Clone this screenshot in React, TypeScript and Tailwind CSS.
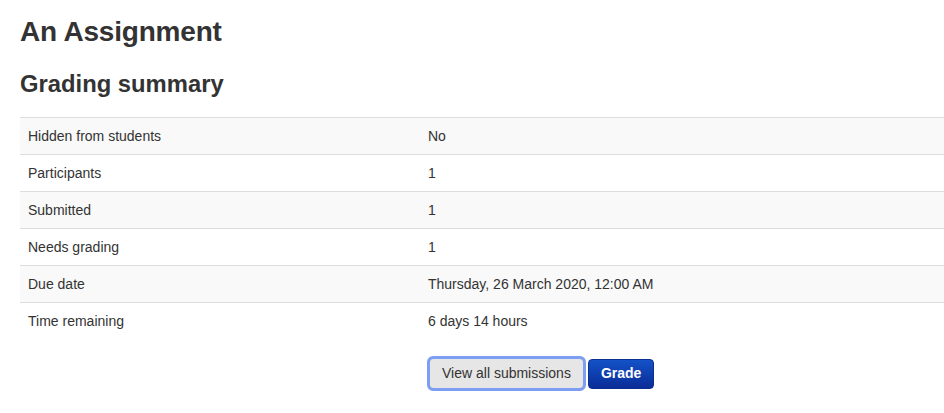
import React from "react";

const rows: [string, string][] = [
  ["Hidden from students", "No"],
  ["Participants", "1"],
  ["Submitted", "1"],
  ["Needs grading", "1"],
  ["Due date", "Thursday, 26 March 2020, 12:00 AM"],
  ["Time remaining", "6 days 14 hours"],
];

export default function App() {
  return (
    <div
      className="w-[944px] h-[413px] overflow-hidden bg-white text-[#333] pl-5"
      style={{ fontFamily: '"Liberation Sans", Arial, sans-serif' }}
    >
      <h2 className="text-[28px] font-bold leading-[40px] pt-[12px] tracking-[-0.2px]">An Assignment</h2>
      <h3 className="text-[23.8px] font-bold leading-[40px] mt-[12px]">Grading summary</h3>
      <div className="mt-[13px] w-[1000px]">
        {rows.map(([k, v], i) => (
          <div
            key={k}
            className={`flex border-t border-[#dddddd] text-[14px] leading-[20px] ${i % 2 === 0 ? "bg-[#f9f9f9]" : "bg-white"}`}
          >
            <div className="w-[400px] p-2">{k}</div>
            <div className="flex-1 p-2">{v}</div>
          </div>
        ))}
      </div>
      <div className="flex items-center gap-[4px] pl-[409px] mt-[19px]">
        <button className="h-[31px] px-[12px] rounded-[4px] border border-[#b8b8b8] bg-[#e6e6e6] text-[14px] text-[#333] outline outline-[3px] outline-[#7d9ef3] -outline-offset-[1px]">
          View all submissions
        </button>
        <button className="h-[30px] px-[12px] rounded-[4px] border border-[#0b2f8f] bg-gradient-to-b from-[#1452c7] to-[#0a2c98] text-white text-[14px] font-bold">
          Grade
        </button>
      </div>
    </div>
  );
}
